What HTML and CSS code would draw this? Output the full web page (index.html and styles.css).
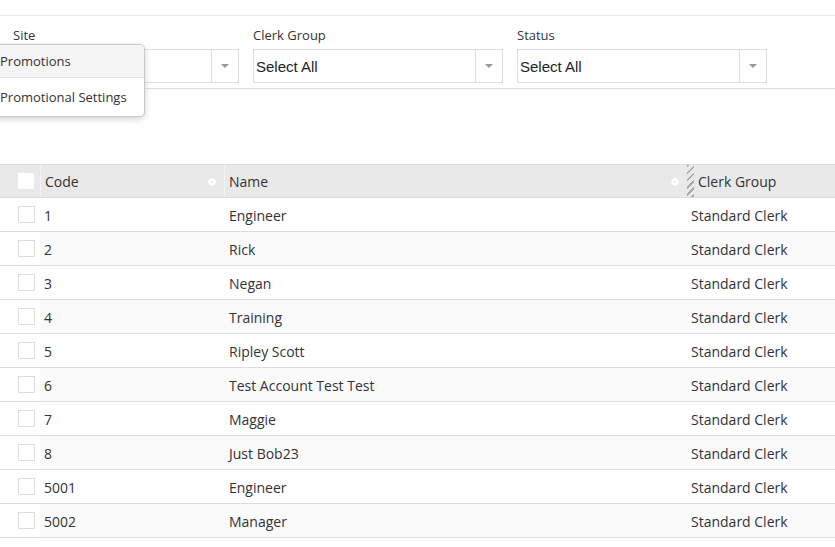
FILE: index.html
```html
<!DOCTYPE html>
<html>
<head>
<meta charset="utf-8">
<link rel="stylesheet" href="styles.css">
</head>
<body>
<div class="topbar"></div>
<div class="filters">
  <div class="field field-site">
    <div class="label">Site</div>
    <div class="select"><span class="value"></span><span class="arrow"><span class="tri"></span></span></div>
  </div>
  <div class="field">
    <div class="label">Clerk Group</div>
    <div class="select"><span class="value">Select All</span><span class="arrow"><span class="tri"></span></span></div>
  </div>
  <div class="field">
    <div class="label">Status</div>
    <div class="select"><span class="value">Select All</span><span class="arrow"><span class="tri"></span></span></div>
  </div>
</div>
<div class="menu">
  <div class="menu-item active">Promotions</div>
  <div class="menu-item">Promotional Settings</div>
</div>
<div class="spacer"></div>
<div class="grid">
  <div class="row head">
    <div class="cell chk"><span class="box head-box"></span></div>
    <div class="cell">Code<svg class="gear" viewBox="0 0 8 8"><path d="M3 0h2v1.2l1-.8 1.4 1.4-.8 1H8v2H6.6l.8 1L6 7.2l-1-.8V8H3V6.4l-1 .8L.6 5.8l.8-1H0v-2h1.4l-.8-1L2 .4l1 .8z" fill="#fff"/><circle cx="4" cy="3.8" r="1" fill="#e9e9e9"/></svg></div>
    <div class="cell name">Name<svg class="gear" viewBox="0 0 8 8"><path d="M3 0h2v1.2l1-.8 1.4 1.4-.8 1H8v2H6.6l.8 1L6 7.2l-1-.8V8H3V6.4l-1 .8L.6 5.8l.8-1H0v-2h1.4l-.8-1L2 .4l1 .8z" fill="#fff"/><circle cx="4" cy="3.8" r="1" fill="#e9e9e9"/></svg></div>
    <div class="cell last"><span class="handle"></span>Clerk Group</div>
  </div>
  <div class="row"><div class="cell chk"><span class="box"></span></div><div class="cell">1</div><div class="cell name">Engineer</div><div class="cell">Standard Clerk</div></div>
  <div class="row alt"><div class="cell chk"><span class="box"></span></div><div class="cell">2</div><div class="cell name">Rick</div><div class="cell">Standard Clerk</div></div>
  <div class="row"><div class="cell chk"><span class="box"></span></div><div class="cell">3</div><div class="cell name">Negan</div><div class="cell">Standard Clerk</div></div>
  <div class="row alt"><div class="cell chk"><span class="box"></span></div><div class="cell">4</div><div class="cell name">Training</div><div class="cell">Standard Clerk</div></div>
  <div class="row"><div class="cell chk"><span class="box"></span></div><div class="cell">5</div><div class="cell name">Ripley Scott</div><div class="cell">Standard Clerk</div></div>
  <div class="row alt"><div class="cell chk"><span class="box"></span></div><div class="cell">6</div><div class="cell name">Test Account Test Test</div><div class="cell">Standard Clerk</div></div>
  <div class="row"><div class="cell chk"><span class="box"></span></div><div class="cell">7</div><div class="cell name">Maggie</div><div class="cell">Standard Clerk</div></div>
  <div class="row alt"><div class="cell chk"><span class="box"></span></div><div class="cell">8</div><div class="cell name">Just Bob23</div><div class="cell">Standard Clerk</div></div>
  <div class="row"><div class="cell chk"><span class="box"></span></div><div class="cell">5001</div><div class="cell name">Engineer</div><div class="cell">Standard Clerk</div></div>
  <div class="row alt"><div class="cell chk"><span class="box"></span></div><div class="cell">5002</div><div class="cell name">Manager</div><div class="cell">Standard Clerk</div></div>
</div>
</body>
</html>
```

FILE: styles.css
```css
html, body {
  margin: 0;
  padding: 0;
  background: #fff;
  overflow: hidden;
}
body {
  font-family: "Open Sans", "Noto Sans", sans-serif;
  color: #333;
  position: relative;
  width: 835px;
  height: 547px;
}
.topbar {
  height: 15px;
  border-bottom: 1px solid #e6e6e6;
}
.filters {
  display: flex;
  gap: 14px;
  padding: 9px 0 0 13px;
  height: 63px;
  border-bottom: 1px solid #e0e0e0;
  margin-left: -24px;
}
.field-site .label {
  padding-left: 24px;
}
.label {
  font-size: 13px;
  line-height: 20px;
  height: 24px;
  color: #333;
}
.select {
  display: flex;
  width: 248px;
  height: 32px;
  border: 1px solid #ddd;
  background: #fff;
}
.value {
  flex: 1;
  font-family: "Liberation Sans", Arial, sans-serif;
  font-size: 15px;
  line-height: 33px;
  padding-left: 2px;
  color: #222;
}
.arrow {
  width: 26px;
  border-left: 1px solid #ddd;
  display: flex;
  align-items: center;
  justify-content: center;
}
.tri {
  width: 0;
  height: 0;
  border-left: 4px solid transparent;
  border-right: 4px solid transparent;
  border-top: 4px solid #999;
}
.menu {
  position: absolute;
  left: -12px;
  top: 44px;
  width: 155px;
  border: 1px solid #c8c8c8;
  border-radius: 5px;
  background: #fff;
  box-shadow: 0 2px 6px rgba(0, 0, 0, 0.18);
  overflow: hidden;
}
.menu-item {
  font-size: 13px;
  line-height: 32px;
  height: 32px;
  padding-left: 11px;
  color: #333;
}
.menu-item.active {
  background: #f5f5f5;
  border-bottom: 1px solid #e3e3e3;
}
.menu-item + .menu-item {
  height: 38px;
  line-height: 38px;
}
.spacer {
  height: 75px;
}
.grid {
  border-top: 1px solid #dcdcdc;
}
.row {
  display: grid;
  grid-template-columns: 40px 184px 463px 1fr;
  height: 33px;
  border-bottom: 1px solid #ddd;
  font-size: 14px;
}
.row.head {
  height: 32px;
}
.row.alt .cell {
  background: #fafafa;
}
.row.alt .cell.chk {
  background: #fff;
}
.cell {
  display: flex;
  align-items: center;
  padding-left: 4px;
  padding-top: 2px;
  white-space: nowrap;
  overflow: hidden;
  position: relative;
}
.cell.name {
  padding-left: 5px;
}
.cell.chk {
  padding-left: 18px;
  padding-top: 0;
}
.box {
  width: 17px;
  height: 17px;
  border: 1px solid #dedede;
  background: #fff;
  box-sizing: border-box;
}
.head .cell {
  background: #e9e9e9;
  border-left: 1px solid #f4f4f4;
  font-size: 14px;
  padding-top: 0;
}
.head .cell.name {
  padding-left: 4px;
}
.head .cell.chk {
  border-left: none;
}
.head-box {
  width: 16px;
  height: 16px;
  border-color: #fff;
}
.gear {
  position: absolute;
  right: 8px;
  top: 13px;
  width: 8px;
  height: 8px;
}
.head .cell.last {
  padding-left: 0;
  border-left: none;
}
.handle {
  width: 7px;
  height: 32px;
  margin-right: 4px;
  background: repeating-linear-gradient(135deg, #aaa 0 2px, #e9e9e9 2px 5px);
}
```
